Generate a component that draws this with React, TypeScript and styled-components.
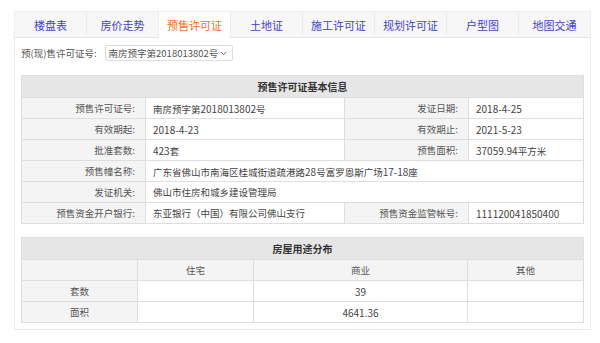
import { ChevronDown } from 'lucide-react';
import styled, { createGlobalStyle } from 'styled-components';

const GlobalStyle = createGlobalStyle`
    body {
        margin: 0;
        background: #fff;
        font-family: "Noto Sans CJK SC", "Open Sans", sans-serif;
        color: #333;
    }
`;

const Page = styled.div`
    padding: 11px 0 0 14px;
`;

const Panneau = styled.div`
    width: 577px;
    box-sizing: border-box;
    border: 1px solid #ebebeb;
    border-top: none;
`;

const Onglets = styled.div`
    display: flex;
    height: 27px;
    background: #f7f7f7;
    border-top: 1px solid #efefef;
    border-bottom: 1px solid #e6e6e6;
    box-sizing: border-box;
    margin: 0 -1px;
`;

const Onglet = styled.div<{ $actif: boolean }>`
    flex: 1;
    display: flex;
    align-items: center;
    justify-content: center;
    font-size: 11px;
    border-left: 1px solid #ececec;
    color: ${({ $actif }) => ($actif ? '#ff6a1a' : '#3f3fd4')};
    background: ${({ $actif }) => ($actif ? '#fff' : 'transparent')};
    margin-bottom: ${({ $actif }) => ($actif ? '-1px' : '0')};
    &:first-child {
        border-left: 1px solid #efefef;
    }
    &:last-child {
        border-right: 1px solid #efefef;
    }
`;

const Corps = styled.div`
    padding: 7px 7px 6px 6px;
`;

const LigneChoix = styled.div`
    display: flex;
    align-items: center;
    gap: 8px;
    height: 16px;
    font-size: 9.5px;
    color: #555;
`;

const Choix = styled.div`
    display: flex;
    align-items: center;
    justify-content: space-between;
    width: 128px;
    height: 16px;
    box-sizing: border-box;
    border: 1px solid #dcdcdc;
    border-radius: 2px;
    background: #fff;
    font-size: 9.5px;
    color: #555;
    padding: 0 4px 0 3px;
    white-space: nowrap;
    & svg {
        flex: none;
        color: #555;
    }
`;

const Num = styled.span`
    font-size: 10px;
`;

const Tableau = styled.table<{ $haut: number }>`
    width: 562px;
    margin-top: ${({ $haut }) => $haut}px;
    border-collapse: collapse;
    table-layout: fixed;
    font-size: 9.5px;
    color: #444;
    & td, & th {
        border: 1px solid #dedede;
        height: 20px;
        padding: 0;
        white-space: nowrap;
    }
`;

const Titre = styled.th`
    background: #e6e6e6;
    font-weight: 700;
    font-size: 10px;
    color: #333;
    text-align: center;
    && { height: 21px; }
`;

const Libelle = styled.td<{ $centre?: boolean }>`
    background: #f4f4f4;
    color: #555;
    text-align: ${({ $centre }) => ($centre ? 'center' : 'right')};
    && { padding-right: ${({ $centre }) => ($centre ? '0' : '10px')}; }
`;

const Valeur = styled.td<{ $centre?: boolean }>`
    background: #fff;
    text-align: ${({ $centre }) => ($centre ? 'center' : 'left')};
    && { padding-left: ${({ $centre }) => ($centre ? '0' : '7px')}; }
`;

const onglets = ['楼盘表', '房价走势', '预售许可证', '土地证', '施工许可证', '规划许可证', '户型图', '地图交通'];

const App = () => {
    return (
        <Page>
            <GlobalStyle />
            <Panneau>
                <Onglets>
                    {onglets.map((o) => (
                        <Onglet key={o} $actif={o === '预售许可证'}>{o}</Onglet>
                    ))}
                </Onglets>
                <Corps>
                    <LigneChoix>
                        <span>预(现)售许可证号:</span>
                        <Choix>
                            <span>南房预字第2018013802号</span>
                            <ChevronDown size={9} strokeWidth={2.5} />
                        </Choix>
                    </LigneChoix>

                    <Tableau $haut={14}>
                        <colgroup>
                            <col style={{ width: 124 }} />
                            <col style={{ width: 199 }} />
                            <col style={{ width: 124 }} />
                            <col style={{ width: 115 }} />
                        </colgroup>
                        <tbody>
                            <tr><Titre colSpan={4}>预售许可证基本信息</Titre></tr>
                            <tr>
                                <Libelle>预售许可证号:</Libelle>
                                <Valeur>南房预字第<Num>2018013802</Num>号</Valeur>
                                <Libelle>发证日期:</Libelle>
                                <Valeur><Num>2018-4-25</Num></Valeur>
                            </tr>
                            <tr>
                                <Libelle>有效期起:</Libelle>
                                <Valeur><Num>2018-4-23</Num></Valeur>
                                <Libelle>有效期止:</Libelle>
                                <Valeur><Num>2021-5-23</Num></Valeur>
                            </tr>
                            <tr>
                                <Libelle>批准套数:</Libelle>
                                <Valeur><Num>423</Num>套</Valeur>
                                <Libelle>预售面积:</Libelle>
                                <Valeur><Num>37059.94</Num>平方米</Valeur>
                            </tr>
                            <tr>
                                <Libelle>预售幢名称:</Libelle>
                                <Valeur colSpan={3}>广东省佛山市南海区桂城街道疏港路<Num>28</Num>号富罗恩斯广场<Num>17-18</Num>座</Valeur>
                            </tr>
                            <tr>
                                <Libelle>发证机关:</Libelle>
                                <Valeur colSpan={3}>佛山市住房和城乡建设管理局</Valeur>
                            </tr>
                            <tr>
                                <Libelle>预售资金开户银行:</Libelle>
                                <Valeur>东亚银行（中国）有限公司佛山支行</Valeur>
                                <Libelle>预售资金监管帐号:</Libelle>
                                <Valeur><Num>111120041850400</Num></Valeur>
                            </tr>
                        </tbody>
                    </Tableau>

                    <Tableau $haut={13}>
                        <colgroup>
                            <col style={{ width: 116 }} />
                            <col style={{ width: 116 }} />
                            <col style={{ width: 214 }} />
                            <col style={{ width: 116 }} />
                        </colgroup>
                        <tbody>
                            <tr><Titre colSpan={4}>房屋用途分布</Titre></tr>
                            <tr>
                                <Libelle $centre />
                                <Libelle $centre>住宅</Libelle>
                                <Libelle $centre>商业</Libelle>
                                <Libelle $centre>其他</Libelle>
                            </tr>
                            <tr>
                                <Libelle $centre>套数</Libelle>
                                <Valeur $centre />
                                <Valeur $centre><Num>39</Num></Valeur>
                                <Valeur $centre />
                            </tr>
                            <tr>
                                <Libelle $centre>面积</Libelle>
                                <Valeur $centre />
                                <Valeur $centre><Num>4641.36</Num></Valeur>
                                <Valeur $centre />
                            </tr>
                        </tbody>
                    </Tableau>
                </Corps>
            </Panneau>
        </Page>
    );
};

export default App;
